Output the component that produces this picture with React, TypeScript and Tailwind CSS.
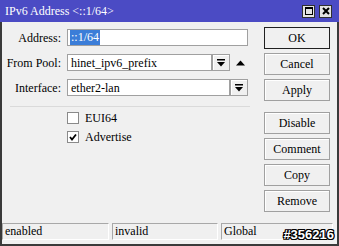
import React from 'react';

const serif = { fontFamily: '"Liberation Serif", "Times New Roman", serif' };

function DropIcon() {
  return (
    <svg width="8" height="8" viewBox="0 0 8 8">
      <rect x="0" y="0" width="8" height="1.5" fill="#000" />
      <polygon points="0,3 8,3 4,7.5" fill="#000" />
    </svg>
  );
}

function DropButton() {
  return (
    <div className="w-[18px] h-[17px] border border-[#a0a0a0] bg-[#f0f0f0] flex items-center justify-center shadow-[inset_1px_1px_0_#fff]">
      <DropIcon />
    </div>
  );
}

function Field({ label, children }: { label: string; children: React.ReactNode }) {
  return (
    <div className="flex items-center h-[17px]">
      <div className="w-[60px] pr-px text-right text-[12px] text-black whitespace-nowrap">{label}</div>
      <div className="ml-[5px] flex items-center">{children}</div>
    </div>
  );
}

function Checkbox({ checked, label }: { checked?: boolean; label: string }) {
  return (
    <div className="flex items-center h-[13px] ml-[65px]">
      <div className="w-[12px] h-[12px] border border-[#8a8a8a] bg-white flex items-center justify-center">
        {checked && (
          <svg width="8" height="8" viewBox="0 0 8 8">
            <polyline points="1,4 3,6.5 7,1.5" fill="none" stroke="#000" strokeWidth="1.8" />
          </svg>
        )}
      </div>
      <span className="ml-[6px] text-[12px] text-black">{label}</span>
    </div>
  );
}

function Btn({ label, primary }: { label: string; primary?: boolean }) {
  return (
    <div
      className={
        'w-[66px] h-[22px] flex items-center justify-center text-[12px] text-black bg-[#f0f0f0] ' +
        (primary ? 'border border-[#202020]' : 'border border-[#a0a0a0] shadow-[inset_1px_1px_0_#fff]')
      }
    >
      {label}
    </div>
  );
}

export default function App() {
  return (
    <div className="relative w-[339px] h-[246px] bg-[#f0f0f0] overflow-hidden" style={serif}>
      {/* Title bar */}
      <div className="h-[22px] bg-[#4b4bc4] flex items-center pl-[5px] pr-[7px]">
        <span className="text-[12px] text-white flex-1">IPv6 Address &lt;::1/64&gt;</span>
        <div className="flex gap-[4px]">
          <div className="w-[13px] h-[13px] bg-[#e4e4e4] border border-[#303030] flex items-center justify-center">
            <div className="w-[8px] h-[8px] border border-black border-t-2" />
          </div>
          <div className="w-[13px] h-[13px] bg-[#e4e4e4] border border-[#303030] flex items-center justify-center">
            <svg width="8" height="8" viewBox="0 0 8 8">
              <path d="M1 1 L7 7 M7 1 L1 7" stroke="#000" strokeWidth="2" />
            </svg>
          </div>
        </div>
      </div>

      {/* Body */}
      <div className="h-[224px] border-x-2 border-b-2 border-[#3a3a3a] flex flex-col">
        <div className="h-[199px] flex">
          {/* Form */}
          <div className="w-[262px] flex flex-col pt-[7px]">
            <div className="flex flex-col gap-[8px]">
              <Field label="Address:">
                <div className="w-[181px] h-[17px] border border-[#a0a0a0] bg-white flex items-center pl-[2px]">
                  <span className="bg-[#3b7dd8] text-white text-[12px] leading-[15px] px-px">::1/64</span>
                </div>
              </Field>
              <Field label="From Pool:">
                <div className="w-[145px] h-[17px] border border-[#a0a0a0] bg-white flex items-center pl-[3px] text-[12px]">
                  hinet_ipv6_prefix
                </div>
                <DropButton />
                <svg width="9" height="6" viewBox="0 0 9 6" className="ml-[6px]">
                  <polygon points="0,5.5 9,5.5 4.5,0.5" fill="#000" />
                </svg>
              </Field>
              <Field label="Interface:">
                <div className="w-[163px] h-[17px] border border-[#a0a0a0] bg-white flex items-center pl-[3px] text-[12px]">
                  ether2-lan
                </div>
                <DropButton />
              </Field>
            </div>
            <div className="mt-[10px] ml-[8px] w-[240px] h-px bg-[#dadada]" />
            <div className="mt-[4px] flex flex-col gap-[6px]">
              <Checkbox label="EUI64" />
              <Checkbox label="Advertise" checked />
            </div>
          </div>

          {/* Buttons */}
          <div className="flex flex-col pt-[5px]">
            <div className="flex flex-col gap-[4px]">
              <Btn label="OK" primary />
              <Btn label="Cancel" />
              <Btn label="Apply" />
            </div>
            <div className="mt-[11px] flex flex-col gap-[4px]">
              <Btn label="Disable" />
              <Btn label="Comment" />
              <Btn label="Copy" />
              <Btn label="Remove" />
            </div>
          </div>
        </div>

        {/* Status bar */}
        <div className="mt-[2px] flex gap-[3px] h-[17px] pr-[4px]">
          <div className="w-[107px] border border-[#a8a8a8] border-b-white border-r-white text-[12px] pl-[2px] leading-[15px]">enabled</div>
          <div className="w-[106px] border border-[#a8a8a8] border-b-white border-r-white text-[12px] pl-[2px] leading-[15px]">invalid</div>
          <div className="flex-1 border border-[#a8a8a8] border-b-white border-r-white text-[12px] pl-[2px] leading-[15px]">Global</div>
        </div>
      </div>

      {/* Watermark */}
      <div
        className="absolute right-[5px] bottom-[2px] text-[13px] font-bold text-white [text-shadow:1px_0_0_#000,-1px_0_0_#000,0_1px_0_#000,0_-1px_0_#000,1px_1px_0_#000,-1px_-1px_0_#000,1px_-1px_0_#000,-1px_1px_0_#000]"
        style={{ fontFamily: '"Liberation Sans", Arial, sans-serif' }}
      >
        #356216
      </div>
    </div>
  );
}
